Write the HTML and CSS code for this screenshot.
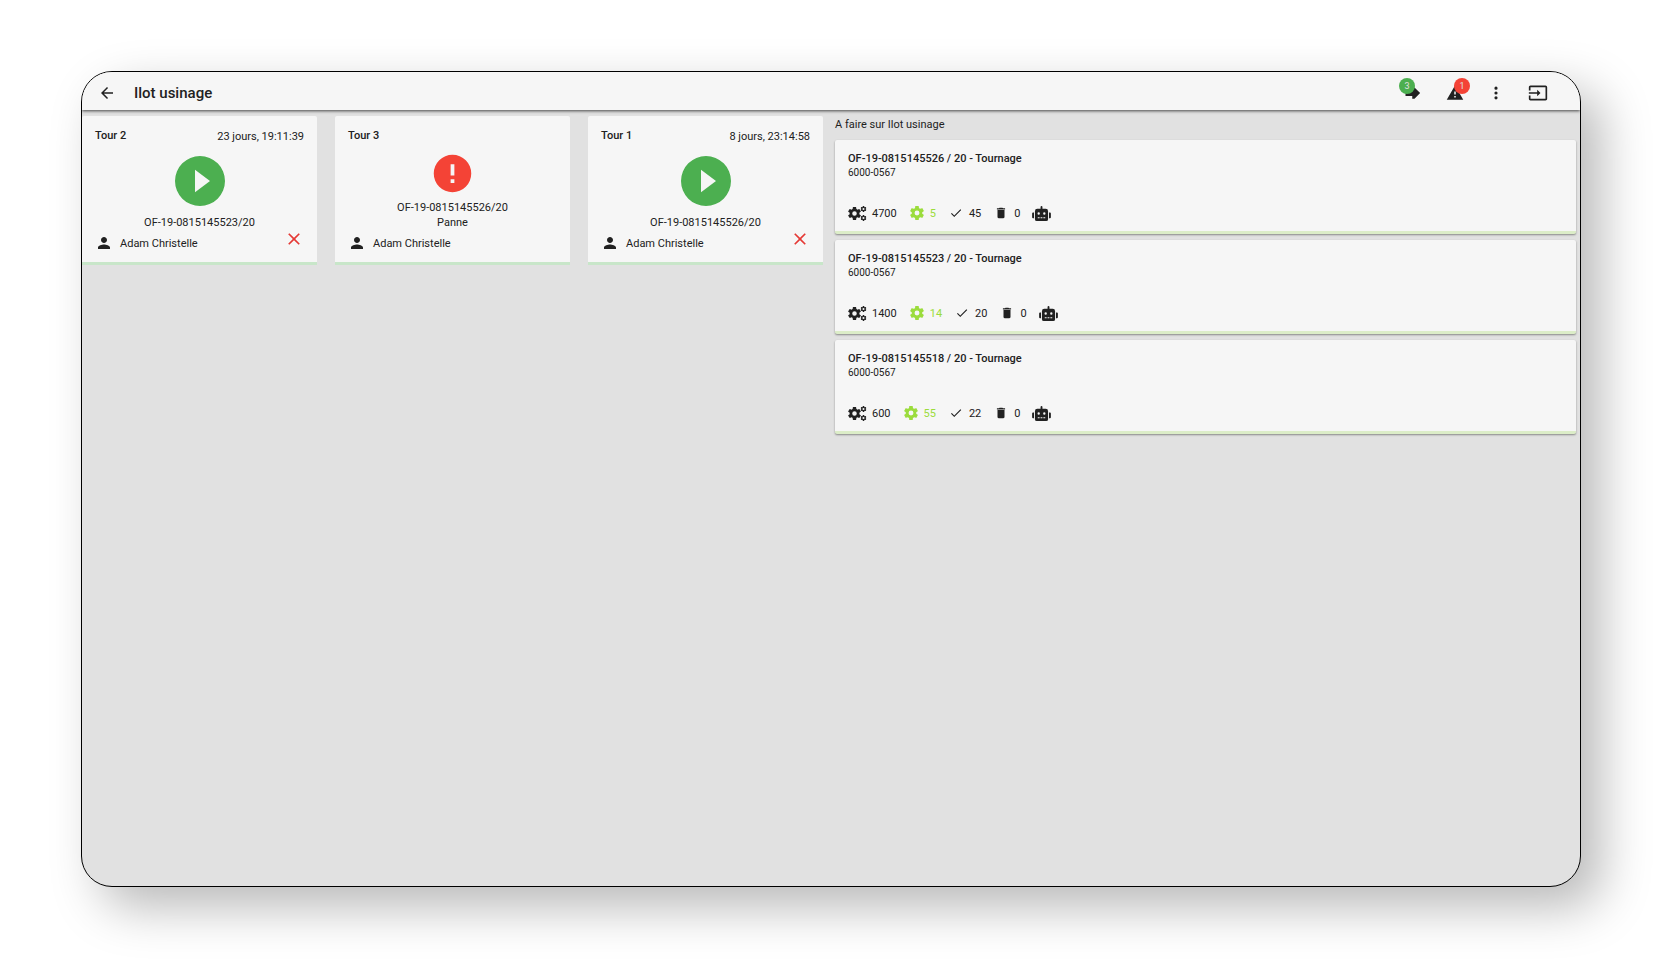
FILE: index.html
```html
<!DOCTYPE html>
<html lang="fr">
  <head>
    <meta charset="utf-8">
    <meta name="viewport" content="width=device-width, initial-scale=1">
    <title>Ilot usinage</title>
    <link rel="stylesheet" href="styles.css">
  </head>
  <body>
    <!-- Icons shared by the cards -->
    <svg class="hide">
      <symbol id="play" viewBox="0 0 24 24"><path d="M12 2a10 10 0 1 0 0 20 10 10 0 0 0 0-20zm-2 14.500v-9l6 4.500z"/></symbol>
      <symbol id="alert" viewBox="0 0 24 24"><path d="M12 2a10 10 0 1 0 0 20 10 10 0 0 0 0-20zm1 15h-2v-2h2zm0-4h-2V7h2z"/></symbol>
      <symbol id="person" viewBox="0 0 24 24"><path d="M12 12c2.210 0 4-1.790 4-4s-1.790-4-4-4-4 1.790-4 4 1.790 4 4 4zm0 2c-2.670 0-8 1.340-8 4v2h16v-2c0-2.660-5.330-4-8-4z"/></symbol>
      <symbol id="close" viewBox="0 0 24 24"><path d="M19 6.410L17.590 5 12 10.590 6.410 5 5 6.410 10.590 12 5 17.590 6.410 19 12 13.410 17.590 19 19 17.590 13.410 12z"/></symbol>
      <symbol id="gear" viewBox="2 2 20 20"><path d="M12 15.500A3.500 3.500 0 0 1 8.500 12 3.500 3.500 0 0 1 12 8.500a3.500 3.500 0 0 1 3.500 3.500 3.500 3.500 0 0 1-3.500 3.500m7.430-2.530c.04-.32.07-.64.07-.97s-.03-.66-.07-1l2.110-1.630c.19-.15.24-.42.12-.64l-2-3.460c-.12-.22-.39-.31-.61-.22l-2.490 1c-.52-.39-1.060-.73-1.690-.98l-.37-2.650A.506.506 0 0 0 14 2h-4c-.25 0-.46.18-.5.42l-.37 2.650c-.63.25-1.170.59-1.690.98l-2.490-1c-.22-.09-.49 0-.61.22l-2 3.460c-.13.22-.07.49.12.64L4.570 11c-.04.34-.07.67-.07 1s.03.65.07.97l-2.110 1.660c-.19.15-.25.42-.12.64l2 3.460c.12.22.39.3.61.22l2.490-1.010c.52.4 1.060.74 1.690.99l.37 2.650c.04.24.25.42.5.42h4c.25 0 .46-.18.5-.42l.37-2.650c.63-.26 1.170-.59 1.690-.99l2.490 1.010c.22.08.49 0 .61-.22l2-3.460c.12-.22.07-.49-.12-.64z"/></symbol>
      <symbol id="gears" viewBox="0 0 38 30">
        <use href="#gear" x="0" y="2" width="26" height="26"/>
        <use href="#gear" x="25" y="0" width="12" height="12"/>
        <use href="#gear" x="25" y="18" width="12" height="12"/>
      </symbol>
      <symbol id="check" viewBox="0 0 24 24"><path d="M9 16.170L4.830 12l-1.420 1.410L9 19 21 7l-1.410-1.410z"/></symbol>
      <symbol id="trash" viewBox="0 0 24 24"><path d="M6 19c0 1.100.9 2 2 2h8c1.100 0 2-.9 2-2V7H6zM19 4h-3.500l-1-1h-5l-1 1H5v2h14z"/></symbol>
      <symbol id="robot" viewBox="0 0 640 512"><path d="M32 224h32v192H32a32 32 0 0 1-32-32V256a32 32 0 0 1 32-32zm512-48v272a64 64 0 0 1-64 64H160a64 64 0 0 1-64-64V176a80 80 0 0 1 80-80h112V32a32 32 0 0 1 64 0v64h112a80 80 0 0 1 80 80zM264 256a40 40 0 1 0-80 0 40 40 0 0 0 80 0zm-8 128h-64v32h64zm96 0h-64v32h64zm104-128a40 40 0 1 0-80 0 40 40 0 0 0 80 0zm-8 128h-64v32h64zm192-128v128a32 32 0 0 1-32 32h-32V224h32a32 32 0 0 1 32 32z"/></symbol>
    </svg>

    <div class="screen">
      <header class="toolbar">
        <button class="icon-button" aria-label="Retour">
          <svg class="icon" viewBox="0 0 24 24"><path d="M20 11H7.830l5.590-5.590L12 4l-8 8 8 8 1.410-1.410L7.830 13H20z"/></svg>
        </button>
        <h1 class="title">Ilot usinage</h1>
        <nav class="actions">
          <button class="icon-button" aria-label="En cours">
            <svg class="icon" viewBox="0 0 24 24"><path d="M2 8h9V4.500h3L21.500 12 14 19.500h-3V16H2z"/></svg>
            <span class="badge badge-left green">3</span>
          </button>
          <button class="icon-button" aria-label="Alertes">
            <svg class="icon" viewBox="0 0 24 24"><path d="M1 21h22L12 2zm12-3h-2v-2h2zm0-4h-2v-4h2z"/></svg>
            <span class="badge badge-right red">1</span>
          </button>
          <button class="icon-button narrow" aria-label="Menu">
            <svg class="icon" viewBox="2 2 20 20"><path d="M12 8a2 2 0 1 0 0-4 2 2 0 0 0 0 4zm0 2a2 2 0 1 0 0 4 2 2 0 0 0 0-4zm0 6a2 2 0 1 0 0 4 2 2 0 0 0 0-4z"/></svg>
          </button>
          <button class="icon-button wide" aria-label="Quitter">
            <svg class="icon" viewBox="0 0 24 24"><path d="M21 3.010H3c-1.100 0-2 .9-2 2V9h2V4.990h18v14.030H3V15H1v4.010c0 1.100.9 1.980 2 1.980h18c1.100 0 2-.88 2-1.980v-14c0-1.110-.9-2-2-2zM11 16l4-4-4-4v3H1v2h10z"/></svg>
          </button>
        </nav>
      </header>

      <main class="content">
        <section class="machines">
          <article class="machine">
            <div class="machine-top">
              <h2 class="name">Tour 2</h2>
              <span class="duration">23 jours, 19:11:39</span>
            </div>
            <div class="status">
              <svg class="play-icon"><use href="#play"/></svg>
              <span>OF-19-0815145523/20</span>
            </div>
            <div class="operator">
              <svg class="person-icon"><use href="#person"/></svg>
              <span>Adam Christelle</span>
              <button class="close" aria-label="Retirer"><svg class="icon"><use href="#close"/></svg></button>
            </div>
          </article>
          <article class="machine">
            <div class="machine-top">
              <h2 class="name">Tour 3</h2>
            </div>
            <div class="status">
              <svg class="alert-icon"><use href="#alert"/></svg>
              <span>OF-19-0815145526/20</span>
              <span>Panne</span>
            </div>
            <div class="operator">
              <svg class="person-icon"><use href="#person"/></svg>
              <span>Adam Christelle</span>
            </div>
          </article>
          <article class="machine">
            <div class="machine-top">
              <h2 class="name">Tour 1</h2>
              <span class="duration">8 jours, 23:14:58</span>
            </div>
            <div class="status">
              <svg class="play-icon"><use href="#play"/></svg>
              <span>OF-19-0815145526/20</span>
            </div>
            <div class="operator">
              <svg class="person-icon"><use href="#person"/></svg>
              <span>Adam Christelle</span>
              <button class="close" aria-label="Retirer"><svg class="icon"><use href="#close"/></svg></button>
            </div>
          </article>
        </section>

        <section class="todo">
          <h2 class="todo-title">A faire sur Ilot usinage</h2>
          <article class="order">
            <h3 class="name">OF-19-0815145526 / 20 - Tournage</h3>
            <p class="ref">6000-0567</p>
            <div class="counts">
              <span class="count"><svg class="big"><use href="#gears"/></svg>4700</span>
              <span class="count lime"><svg class="small"><use href="#gear"/></svg>5</span>
              <span class="count"><svg class="small"><use href="#check"/></svg>45</span>
              <span class="count"><svg class="small"><use href="#trash"/></svg>0</span>
              <span class="count"><svg class="big"><use href="#robot"/></svg></span>
            </div>
          </article>
          <article class="order">
            <h3 class="name">OF-19-0815145523 / 20 - Tournage</h3>
            <p class="ref">6000-0567</p>
            <div class="counts">
              <span class="count"><svg class="big"><use href="#gears"/></svg>1400</span>
              <span class="count lime"><svg class="small"><use href="#gear"/></svg>14</span>
              <span class="count"><svg class="small"><use href="#check"/></svg>20</span>
              <span class="count"><svg class="small"><use href="#trash"/></svg>0</span>
              <span class="count"><svg class="big"><use href="#robot"/></svg></span>
            </div>
          </article>
          <article class="order">
            <h3 class="name">OF-19-0815145518 / 20 - Tournage</h3>
            <p class="ref">6000-0567</p>
            <div class="counts">
              <span class="count"><svg class="big"><use href="#gears"/></svg>600</span>
              <span class="count lime"><svg class="small"><use href="#gear"/></svg>55</span>
              <span class="count"><svg class="small"><use href="#check"/></svg>22</span>
              <span class="count"><svg class="small"><use href="#trash"/></svg>0</span>
              <span class="count"><svg class="big"><use href="#robot"/></svg></span>
            </div>
          </article>
        </section>
      </main>
    </div>
  </body>
</html>
```
FILE: styles.css
```css
* {
  box-sizing: border-box;
}
body {
  margin: 0;
  min-height: 100vh;
  padding: 71px 79px 73px 81px;
  display: flex;
  background: white;
  color: #212121;
  font-family: Roboto, sans-serif;
  font-size: 11px;
  line-height: 15px;
}
h1, h2, h3, p {
  margin: 0;
}
svg {
  display: block;
  flex: none;
  fill: currentColor;
}
button {
  padding: 0;
  border: 0;
  background: none;
  color: inherit;
  font: inherit;
  cursor: pointer;
}
.hide {
  display: none;
}

.screen {
  flex: 1;
  overflow: hidden;
  border: 1px solid black;
  border-radius: 31px;
  background: #e1e1e1;
  box-shadow: 20px 20px 50px rgba(0, 0, 0, 0.28);
}

/* top bar */
.toolbar {
  position: relative;
  display: flex;
  align-items: center;
  height: 38px;
  padding: 3px 32px 0 16px;
  background: #f6f6f6;
  box-shadow: 0 1px 3px rgba(0, 0, 0, 0.7);
}
.icon-button {
  position: relative;
  width: 18px;
  height: 18px;
}
.narrow {
  width: 16px;
}
.wide {
  width: 20px;
  height: 20px;
}
.icon {
  width: 100%;
  height: 100%;
}
.title {
  margin-left: 18px;
  font-size: 15px;
  font-weight: 500;
  line-height: 20px;
}
.actions {
  display: flex;
  align-items: center;
  gap: 24px;
  margin-left: auto;
}
.badge {
  position: absolute;
  top: -6px;
  width: 16px;
  height: 16px;
  border-radius: 50%;
  color: #e0e0e0;
  font-size: 9px;
  line-height: 16px;
  text-align: center;
}
.badge-left {
  left: -5px;
}
.badge-right {
  right: -6px;
}
.green {
  background: #4caf50;
}
.red {
  background: #f44336;
}

.content {
  display: grid;
  grid-template-columns: 1fr 1fr;
  gap: 12px;
  padding: 6px 4px 6px 0;
}

/* machines */
.machines {
  display: grid;
  grid-template-columns: repeat(3, 1fr);
  align-items: start;
  gap: 18px;
}
.machine {
  padding: 12px 13px 10px;
  border-bottom: 3px solid #c8e6c9;
  border-radius: 2px 2px 0 0;
  background: #f6f6f6;
}
.machine-top {
  display: flex;
  justify-content: space-between;
  height: 23px;
}
.name {
  font-size: 11px;
  font-weight: 500;
}
.duration {
  padding-top: 1px;
}
.status {
  display: flex;
  flex-direction: column;
  align-items: center;
}
.play-icon {
  width: 60px;
  height: 60px;
  margin-bottom: 4px;
  color: #4caf50;
}
.alert-icon {
  width: 45px;
  height: 45px;
  margin-bottom: 4px;
  color: #f44336;
}
.operator {
  display: flex;
  align-items: center;
  gap: 7px;
  height: 18px;
  margin-top: 4px;
}
.person-icon {
  width: 18px;
  height: 18px;
}
.close {
  width: 20px;
  height: 20px;
  margin: 0 0 8px auto;
  color: #e53935;
}

/* work orders */
.todo-title {
  padding-top: 1px;
  margin-bottom: 7px;
  font-size: 11px;
  font-weight: 400;
  line-height: 16px;
}
.order {
  margin-bottom: 6px;
  padding: 11px 13px 9px;
  border-bottom: 3px solid #dcedc8;
  border-radius: 2px;
  background: #f6f6f6;
  box-shadow: 0 1px 2px rgba(0, 0, 0, 0.4);
}
.ref {
  font-size: 10px;
  line-height: 14px;
}
.counts {
  display: flex;
  gap: 12px;
  height: 18px;
  margin-top: 24px;
}
.count {
  display: flex;
  align-items: center;
  gap: 5px;
}
.big {
  width: 19px;
  height: 15px;
}
.small {
  width: 16px;
  height: 14px;
}
.lime {
  color: #9bdc3c;
}
```
